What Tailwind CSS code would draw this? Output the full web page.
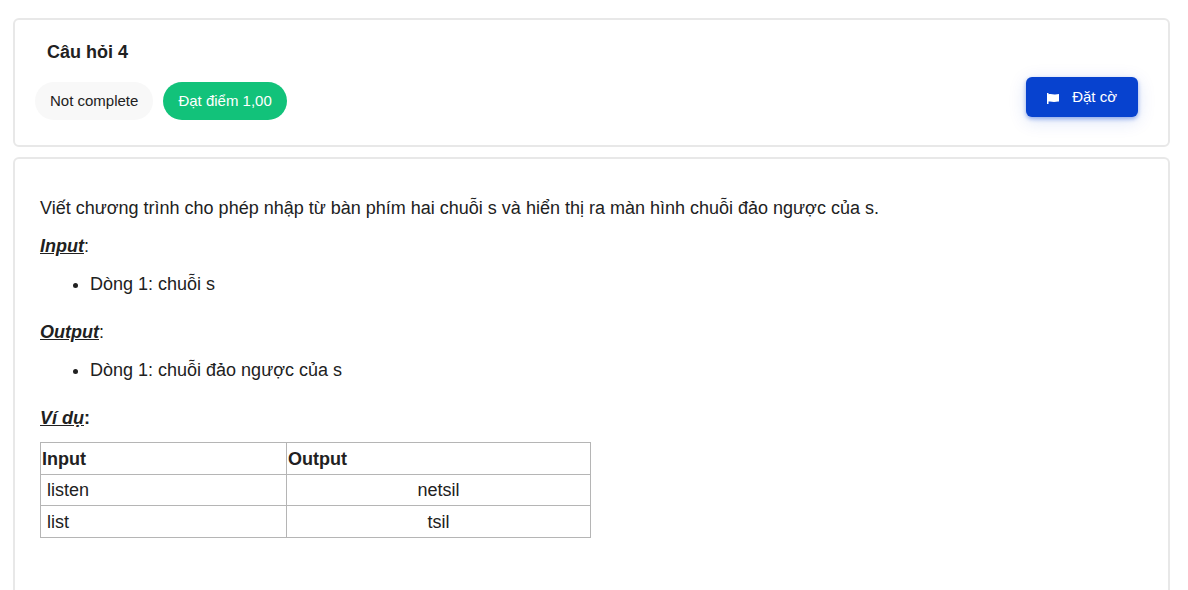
<!DOCTYPE html>
<html lang="vi">
<head>
<meta charset="utf-8">
<meta name="viewport" content="width=device-width, initial-scale=1">
<title>Câu hỏi 4</title>
<script src="https://cdn.jsdelivr.net/npm/@tailwindcss/browser@4"></script>
</head>
<body class="bg-white font-['Liberation_Sans',Arial,sans-serif] text-[#212121]">
<main class="flex h-screen flex-col gap-[10px] overflow-hidden pt-[18px] pr-[18px] pl-[13px]">
  <header class="shrink-0 rounded-md border-2 border-[#e8e8e8] px-5 pt-[18px] pb-[25px]">
    <h1 class="pl-3 text-lg leading-7 font-bold">Câu hỏi 4</h1>
    <div class="mt-[11px] flex items-start justify-between pr-[10px]">
      <div class="mt-[5px] flex gap-[10px] text-[15px] leading-[38px]">
        <span class="rounded-full bg-[#f8f8f8] px-[15px]">Not complete</span>
        <span class="rounded-full bg-[#12c27a] px-[15px] text-white">Đạt điểm 1,00</span>
      </div>
      <button type="button" class="flex h-10 items-center gap-[13px] rounded-md bg-[#0742cf] px-[21px] text-[15px] text-white shadow-[0_2px_4px_rgba(7,66,207,0.4),0_4px_18px_rgba(7,66,207,0.15)]">
        <svg class="mt-[2px] h-[11px] w-3" viewBox="0 0 12 11" fill="#fff" aria-hidden="true"><path d="M0 0h1.500v1.300C4 .3 6 1.800 8 1.500 9.500 1.400 10.800 .9 12 .9V8.600C10.500 8.300 9 8.900 7 8.900 5 8.900 3.500 8 1.500 8.600V11H0z"/></svg>
        <span>Đặt cờ</span>
      </button>
    </div>
  </header>
  <section class="flex-1 rounded-t-md border-2 border-b-0 border-[#e8e8e8] px-[25px] pt-[35px] text-lg leading-7">
    <p class="mb-[10px]">Viết chương trình cho phép nhập từ bàn phím hai chuỗi s và hiển thị ra màn hình chuỗi đảo ngược của s.</p>
    <p class="mb-[10px]"><strong class="italic underline">Input</strong>:</p>
    <ul class="mb-5 list-disc pl-[50px]"><li>Dòng 1: chuỗi s</li></ul>
    <p class="mb-[10px]"><strong class="italic underline">Output</strong>:</p>
    <ul class="mb-5 list-disc pl-[50px]"><li>Dòng 1: chuỗi đảo ngược của s</li></ul>
    <p class="mb-[10px] font-bold"><span class="italic underline">Ví dụ</span>:</p>
    <table class="w-[551px] max-w-full table-fixed border-collapse">
      <colgroup><col class="w-[246px]"><col></colgroup>
      <thead>
        <tr>
          <th scope="col" class="border border-[#b5b5b5] px-px pt-[2px] pb-px text-left">Input</th>
          <th scope="col" class="border border-[#b5b5b5] px-px pt-[2px] pb-px text-left">Output</th>
        </tr>
      </thead>
      <tbody>
        <tr>
          <td class="border border-[#b5b5b5] px-[6px] py-px">listen</td>
          <td class="border border-[#b5b5b5] px-px py-px text-center">netsil</td>
        </tr>
        <tr>
          <td class="border border-[#b5b5b5] px-[6px] pt-[2px] pb-px">list</td>
          <td class="border border-[#b5b5b5] px-px pt-[2px] pb-px text-center">tsil</td>
        </tr>
      </tbody>
    </table>
  </section>
</main>
</body>
</html>
